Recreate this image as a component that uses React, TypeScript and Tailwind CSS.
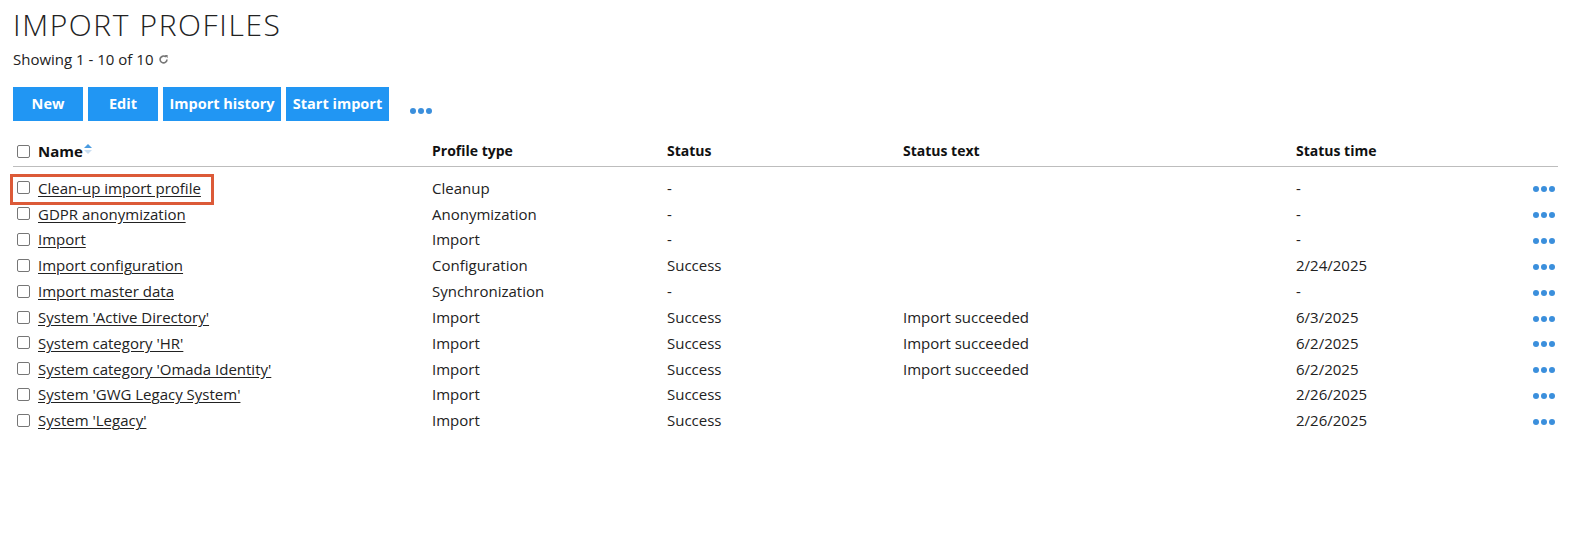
import React from "react";

type Row = { name: string; type: string; status: string; text: string; time: string };

const rows: Row[] = [
  { name: "Clean-up import profile", type: "Cleanup", status: "-", text: "", time: "-" },
  { name: "GDPR anonymization", type: "Anonymization", status: "-", text: "", time: "-" },
  { name: "Import", type: "Import", status: "-", text: "", time: "-" },
  { name: "Import configuration", type: "Configuration", status: "Success", text: "", time: "2/24/2025" },
  { name: "Import master data", type: "Synchronization", status: "-", text: "", time: "-" },
  { name: "System 'Active Directory'", type: "Import", status: "Success", text: "Import succeeded", time: "6/3/2025" },
  { name: "System category 'HR'", type: "Import", status: "Success", text: "Import succeeded", time: "6/2/2025" },
  { name: "System category 'Omada Identity'", type: "Import", status: "Success", text: "Import succeeded", time: "6/2/2025" },
  { name: "System 'GWG Legacy System'", type: "Import", status: "Success", text: "", time: "2/26/2025" },
  { name: "System 'Legacy'", type: "Import", status: "Success", text: "", time: "2/26/2025" },
];

let Box = () => (
  <span className="inline-block w-[13px] h-[13px] border border-[#767676] rounded-[2px] bg-white shrink-0"></span>
);

let Dots = () => (
  <span className="flex gap-[2px]">
    <span className="w-[6px] h-[6px] rounded-full bg-[#3b8fdc]"></span>
    <span className="w-[6px] h-[6px] rounded-full bg-[#3b8fdc]"></span>
    <span className="w-[6px] h-[6px] rounded-full bg-[#3b8fdc]"></span>
  </span>
);

let Btn = ({ label, w }: { label: string; w: string }) => (
  <button className={`${w} h-[34px] bg-[#2196f3] text-white font-bold text-[14.5px]`}>{label}</button>
);

const App = () => {
  return (
    <div className="w-[1585px] h-[537px] bg-white text-[#222] font-['Open_Sans',sans-serif] text-[15px] overflow-hidden">
      <div className="pl-[13px] pr-[27px]">
        <h1 className="pt-[7px] h-[46px] text-[30px] font-light tracking-[1.6px] text-[#222] leading-[36px]">
          IMPORT PROFILES
        </h1>
        <div className="flex items-center h-[26px] gap-[5px]">
          <span>Showing 1 - 10 of 10</span>
          <svg width="11" height="11" viewBox="0 0 16 16" className="mt-[1px]">
            <path d="M13 8a5 5 0 1 1-1.5-3.6" fill="none" stroke="#777" strokeWidth="2.4" />
            <path d="M9.5 1.5 L14 1.5 L14 6 Z" fill="#777" />
          </svg>
        </div>
        <div className="flex items-center gap-[5px] mt-[15px]">
          <Btn label="New" w="w-[70px]" />
          <Btn label="Edit" w="w-[70px]" />
          <Btn label="Import history" w="w-[118px]" />
          <Btn label="Start import" w="w-[103px]" />
          <span className="ml-[16px] mt-[14px]">
            <Dots />
          </span>
        </div>

        <div className="mt-[13px]">
          <div className="flex items-center h-[33px] border-b border-[#bdbdbd] font-bold text-[14px] text-[#111]">
            <div className="w-[419px] flex items-center gap-[8px] pl-[4px] pt-[2px]">
              <Box />
              <span className="flex items-center text-[15px]">
                Name
                <svg width="8" height="12" viewBox="0 0 8 12" className="ml-[1px] -mt-[4px]">
                  <path d="M0 5 L4 1 L8 5 Z" fill="#4a9be0" />
                  <path d="M0 7 L4 11 L8 7 Z" fill="#c9def2" />
                </svg>
              </span>
            </div>
            <div className="w-[235px]">Profile type</div>
            <div className="w-[236px]">Status</div>
            <div className="w-[393px]">Status text</div>
            <div className="flex-1">Status time</div>
          </div>
          <div className="pt-[8px]">
            {rows.map((r, i) => (
              <div key={r.name} className="relative flex items-center h-[25.85px]">
                {i === 0 && (
                  <div className="absolute left-[-3px] top-[-1px] w-[204px] h-[31px] border-[3px] border-[#dc5a38]"></div>
                )}
                <div className="w-[419px] flex items-center gap-[8px] pl-[4px]">
                  <Box />
                  <a className="underline underline-offset-2 text-[#222]">{r.name}</a>
                </div>
                <div className="w-[235px]">{r.type}</div>
                <div className="w-[236px]">{r.status}</div>
                <div className="w-[393px]">{r.text}</div>
                <div className="flex-1">{r.time}</div>
                <div className="pr-[3px] pt-[3px]">
                  <Dots />
                </div>
              </div>
            ))}
          </div>
        </div>
      </div>
    </div>
  );
};

export default App;
